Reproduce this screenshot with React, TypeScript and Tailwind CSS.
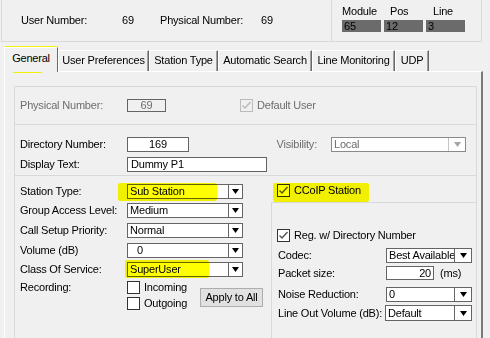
import React from "react";
import clsx from "clsx";

// small win32-ish widgets

function Arrow({ disabled }: { disabled?: boolean }) {
  return (
    <svg width="7" height="5" viewBox="0 0 7 5">
      <polygon points="0,0 7,0 3.5,5" fill={disabled ? "#a6a6a6" : "#000"} />
    </svg>
  );
}

interface SelectProps {
  value: string;
  className: string;
  valueClass?: string;
  arrowClass?: string;
  disabled?: boolean;
}

const Select: React.FC<SelectProps> = ({
  value,
  className,
  valueClass = "pl-[2px]",
  arrowClass = "w-[14px]",
  disabled,
}) => (
  <div
    className={clsx(
      "flex shrink-0 bg-white border overflow-hidden",
      disabled ? "border-[#8a8a8a]" : "border-[#646464]",
      className
    )}
  >
    <div
      className={clsx(
        "flex-1 min-w-0 flex items-center whitespace-nowrap overflow-hidden",
        valueClass,
        disabled && "text-[#6d6d6d]"
      )}
    >
      {value}
    </div>
    <div
      className={clsx(
        "shrink-0 flex items-center justify-center border-l",
        disabled ? "border-[#c4c4c4]" : "border-[#646464]",
        arrowClass
      )}
    >
      <Arrow disabled={disabled} />
    </div>
  </div>
);

function Check({ checked, disabled }: { checked?: boolean; disabled?: boolean }) {
  return (
    <div
      className={clsx(
        "w-[13px] h-[13px] shrink-0 border flex items-center justify-center",
        disabled ? "border-[#bcbcbc] bg-[#f0f0f0]" : "border-[#333333] bg-white"
      )}
    >
      {checked && (
        <svg width="11" height="11" viewBox="0 0 11 11">
          <polyline
            points="1.5,5.5 4,8 9.5,2"
            fill="none"
            stroke={disabled ? "#b8b8b8" : "#555555"}
            strokeWidth="1.4"
          />
        </svg>
      )}
    </div>
  );
}

const TABS = [
  { label: "User Preferences", w: "w-[91px]" },
  { label: "Station Type", w: "w-[69px]" },
  { label: "Automatic Search", w: "w-[94px]" },
  { label: "Line Monitoring", w: "w-[83px]" },
  { label: "UDP", w: "w-[34px]" },
];

export default function App() {
  return (
    <div className="relative w-[490px] h-[338px] overflow-hidden bg-[#f0f0f0] text-black text-[11px] leading-[13px] tracking-[-0.2px] font-['Liberation_Sans',Arial,sans-serif]">
      {/* header info */}
      <div className="ml-px w-[481px] h-[42px] flex border-x border-b border-[#d9d9d9]">
        <div className="w-[329px] flex items-center pl-[19px]">
          <span className="w-[101px]">User Number:</span>
          <span className="w-[38px]">69</span>
          <span className="w-[101px]">Physical Number:</span>
          <span>69</span>
        </div>
        <div className="flex-1 border-l border-[#d9d9d9] pl-[10px] pt-[5px]">
          <div className="grid grid-cols-[39px_39px_39px] gap-x-[3px]">
            <span className="h-[15px]">Module</span>
            <span className="h-[15px] pl-[6px]">Pos</span>
            <span className="h-[15px] pl-[7px]">Line</span>
            <div className="h-[12px] leading-[12px] bg-[#6b6b6b] pl-[2px]">65</div>
            <div className="h-[12px] leading-[12px] bg-[#6b6b6b] pl-[2px]">12</div>
            <div className="h-[12px] leading-[12px] bg-[#6b6b6b] pl-[2px]">3</div>
          </div>
        </div>
      </div>

      {/* tabs */}
      <div className="ml-[4px] mt-[5px] h-[24px] flex items-end">
        <div className="relative z-10 -mb-px h-[25px] w-[54px] bg-[#f0f0f0] border-t border-l border-white border-r border-r-[#696969] pt-[4px] text-center">
          General
        </div>
        {TABS.map((t) => (
          <div
            key={t.label}
            className={clsx(
              "h-[21px] border-t border-l border-white border-r border-r-[#696969] shadow-[inset_-1px_0_0_#a0a0a0] pt-[3px] text-center whitespace-nowrap",
              t.w
            )}
          >
            {t.label}
          </div>
        ))}
      </div>

      {/* tab page */}
      <div className="ml-[4px] w-[479px] h-[267px] border-t border-l border-white border-r-2 border-r-[#7a7a7a] pt-[14px] pl-[9px]">
        <div className="w-[463px] h-[260px] border border-[#d9d9d9]">
          {/* physical number */}
          <div className="h-[37px] flex items-center pl-[5px]">
            <span className="w-[107px] text-[#6d6d6d]">Physical Number:</span>
            <div className="w-[39px] h-[13px] border border-[#646464] bg-[#f0f0f0] text-center leading-[11px] text-[#6d6d6d]">
              69
            </div>
            <div className="ml-[74px] flex items-center gap-[4px]">
              <Check checked disabled />
              <span className="text-[#6d6d6d]">Default User</span>
            </div>
          </div>

          {/* directory */}
          <div className="h-[51px] border-t border-[#d9d9d9] pt-[12px] pl-[5px]">
            <div className="h-[15px] flex items-center">
              <span className="w-[107px]">Directory Number:</span>
              <div className="w-[62px] h-[15px] border border-[#646464] bg-white text-center">169</div>
              <span className="w-[128px] text-right text-[#6d6d6d]">Visibility:</span>
              <Select
                value="Local"
                disabled
                className="ml-[14px] w-[135px] h-[15px]"
                arrowClass="w-[17px]"
              />
            </div>
            <div className="mt-[5px] h-[15px] flex items-center">
              <span className="w-[107px]">Display Text:</span>
              <div className="w-[140px] h-[15px] border border-[#646464] bg-white pl-[3px]">Dummy P1</div>
            </div>
          </div>

          {/* station settings */}
          <div className="border-t border-[#d9d9d9] flex">
            <div className="w-[256px] pt-[8px] pl-[5px]">
              <div className="h-[15px] flex items-center">
                <span className="w-[107px]">Station Type:</span>
                <Select value="Sub Station" className="w-[116px] h-[15px]" />
              </div>
              <div className="mt-[4px] h-[15px] flex items-center">
                <span className="w-[107px]">Group Access Level:</span>
                <Select value="Medium" className="w-[116px] h-[15px]" />
              </div>
              <div className="mt-[5px] h-[15px] flex items-center">
                <span className="w-[107px]">Call Setup Priority:</span>
                <Select value="Normal" className="w-[116px] h-[15px]" />
              </div>
              <div className="mt-[5px] h-[15px] flex items-center">
                <span className="w-[107px]">Volume (dB)</span>
                <Select value="0" valueClass="pl-[9px]" className="w-[116px] h-[15px]" />
              </div>
              <div className="mt-[4px] h-[15px] flex items-center">
                <span className="w-[107px]">Class Of Service:</span>
                <Select value="SuperUser" className="w-[116px] h-[15px]" />
              </div>
              <div className="mt-[4px] flex">
                <span className="w-[107px]">Recording:</span>
                <div className="w-[73px]">
                  <div className="h-[13px] flex items-center gap-[4px]">
                    <Check />
                    <span>Incoming</span>
                  </div>
                  <div className="mt-[3px] h-[13px] flex items-center gap-[4px]">
                    <Check />
                    <span>Outgoing</span>
                  </div>
                </div>
                <div className="mt-[7px] w-[63px] h-[19px] border border-[#adadad] bg-[#e1e1e1] flex items-center justify-center whitespace-nowrap">
                  Apply to All
                </div>
              </div>
            </div>

            <div className="flex-1 pt-[8px]">
              <div className="h-[13px] pl-[6px] flex items-center gap-[4px]">
                <Check checked />
                <span>CCoIP Station</span>
              </div>
              <div className="mt-[5px] h-[140px] border-t border-l border-[#d9d9d9]">
                <div className="mt-[26px] h-[13px] pl-[5px] flex items-center gap-[4px]">
                  <Check checked />
                  <span>Reg. w/ Directory Number</span>
                </div>
                <div className="mt-[6px] h-[15px] pl-[6px] flex items-center">
                  <span className="w-[108px]">Codec:</span>
                  <Select value="Best Available" className="w-[86px] h-[15px]" arrowClass="w-[17px]" />
                </div>
                <div className="mt-[3px] h-[14px] pl-[6px] flex items-center">
                  <span className="w-[108px]">Packet size:</span>
                  <div className="w-[48px] h-[14px] border border-[#646464] bg-white text-right pr-[2px] leading-[12px]">20</div>
                  <span className="ml-[6px]">(ms)</span>
                </div>
                <div className="mt-[7px] h-[15px] pl-[6px] flex items-center">
                  <span className="w-[108px]">Noise Reduction:</span>
                  <Select value="0" className="w-[86px] h-[15px]" arrowClass="w-[17px]" />
                </div>
                <div className="mt-[3px] h-[16px] pl-[6px] flex items-center">
                  <span className="w-[107px] whitespace-nowrap">Line Out Volume (dB):</span>
                  <Select value="Default" className="w-[87px] h-[16px]" arrowClass="w-[17px]" />
                </div>
              </div>
            </div>
          </div>
        </div>
      </div>

      {/* highlighter marks */}
      <div className="absolute left-[4px] top-[46px] w-[54px] h-[20px] rounded-[2px] bg-[#ffff00] mix-blend-multiply" />
      <div className="absolute left-[13px] top-[62px] w-[29px] h-[11px] bg-[#ffff00] mix-blend-multiply" />
      <div className="absolute left-[118px] top-[183px] w-[99px] h-[18px] rounded-[2px] bg-[#ffff00] mix-blend-multiply" />
      <div className="absolute left-[125px] top-[260px] w-[84px] h-[18px] rounded-[2px] bg-[#ffff00] mix-blend-multiply" />
      <div className="absolute left-[273px] top-[183px] w-[96px] h-[19px] rounded-[2px] bg-[#ffff00] mix-blend-multiply" />
    </div>
  );
}
